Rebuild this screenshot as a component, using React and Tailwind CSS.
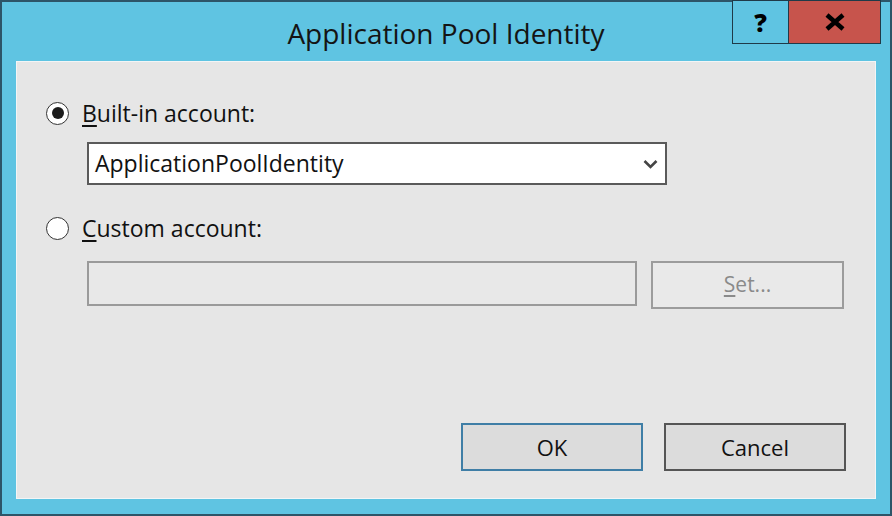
import React from "react";

const font = { fontFamily: '"Open Sans", "Noto Sans", sans-serif' };

const Radio = ({ checked }) => (
  <span className="flex h-[23px] w-[23px] items-center justify-center rounded-full border-[1.5px] border-[#333] bg-white">
    {checked && <span className="h-[12px] w-[12px] rounded-full bg-[#1c1c1c]" />}
  </span>
);

const App = () => {
  return (
    <div
      className="flex h-[516px] w-[892px] flex-col border-2 border-[#2d5568] bg-[#5fc4e2] text-[#111]"
      style={font}
    >
      {/* Title bar */}
      <div className="grid h-[59px] grid-cols-[1fr_auto_1fr]">
        <div />
        <div className="flex items-center pt-[2px] text-[28px] text-[#141414]">Application Pool Identity</div>
        <div className="flex items-start justify-end pr-[9px]">
          <div className="-mt-[2px] flex h-[44px] w-[57px] items-center justify-center border border-[#1f3a48] bg-[#5fc4e2]">
            <span className="text-[25px] font-extrabold leading-none text-black">?</span>
          </div>
          <div className="-mt-[2px] flex h-[44px] w-[92px] items-center justify-center border border-l-0 border-[#1f3a48] bg-[#c7544c]">
            <svg width="22" height="18" viewBox="0 0 22 18">
              <path d="M3 2 L19 16 M19 2 L3 16" stroke="#000" strokeWidth="4.5" strokeLinecap="butt" />
            </svg>
          </div>
        </div>
      </div>

      {/* Client area */}
      <div className="mx-[14px] mb-[15px] flex flex-1 flex-col border border-[#f3f5f6] bg-[#e6e6e6] px-[29px] pt-[39px]">
        <div className="flex items-center gap-[13px]">
          <Radio checked />
          <span className="text-[23px] leading-[24px]">
            <span className="underline underline-offset-[3px]">B</span>uilt-in account:
          </span>
        </div>

        <div className="ml-[41px] mt-[17px] flex h-[43px] w-[580px] items-center justify-between border-2 border-[#5a5a5a] bg-white pl-[6px] pr-[7px]">
          <span className="text-[23px]">ApplicationPoolIdentity</span>
          <svg width="15" height="10" viewBox="0 0 15 10">
            <path d="M1.5 2 L7.5 8 L13.5 2" fill="none" stroke="#444" strokeWidth="2.6" />
          </svg>
        </div>

        <div className="mt-[31px] flex items-center gap-[13px]">
          <Radio />
          <span className="text-[23px] leading-[24px]">
            <span className="underline underline-offset-[3px]">C</span>ustom account:
          </span>
        </div>

        <div className="ml-[41px] mt-[21px] flex items-start gap-[14px]">
          <div className="h-[45px] w-[550px] border-2 border-[#9a9a9a] bg-[#e8e8e8]" />
          <div className="flex h-[48px] w-[193px] items-center justify-center border-2 border-[#9c9c9c] bg-[#e9e9e9] text-[21px] text-[#8a8a8a]">
            <span>
              <span className="underline underline-offset-[3px]">S</span>et...
            </span>
          </div>
        </div>

        <div className="mt-auto mb-[27px] flex justify-end gap-[21px]">
          <button className="flex h-[48px] w-[182px] items-center justify-center border-2 border-[#3f7ea6] bg-[#dcdcdc] text-[22px] text-[#111]">
            OK
          </button>
          <button className="flex h-[48px] w-[182px] items-center justify-center border-2 border-[#555] bg-[#dcdcdc] text-[22px] text-[#111]">
            Cancel
          </button>
        </div>
      </div>
    </div>
  );
};

export default App;
